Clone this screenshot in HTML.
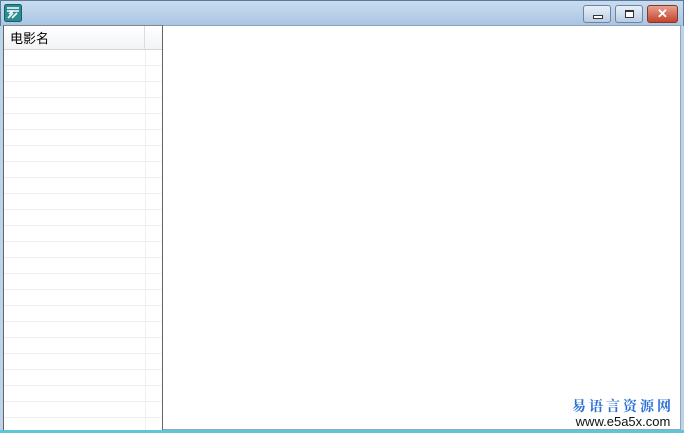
<!DOCTYPE html>
<html><head><meta charset="utf-8"><style>
*{margin:0;padding:0;box-sizing:border-box}
body{width:684px;height:433px;overflow:hidden;background:#bcd3ea;position:relative;font-family:"Liberation Sans","Noto Sans CJK SC",sans-serif}
.title{position:absolute;left:0;top:0;width:684px;height:26px;background:linear-gradient(#c9dcf0,#a9c4e2);border:1px solid #5a7a99;border-bottom:none}
.client{position:absolute;left:3px;top:25px;width:678px;height:405px;background:#fff;border:1px solid #8ea6bf}
.bottom{position:absolute;left:0;top:430px;width:684px;height:3px;background:#5fc6d8}
.list{position:absolute;left:3px;top:25px;width:160px;height:406px;border:1px solid #646464;border-top:1px solid #828790;background:#fff;overflow:hidden}
.hdr{position:absolute;left:0;top:0;width:158px;height:24px;background:linear-gradient(#fff,#f3f4f6);border-bottom:1px solid #d5d5d5;font-size:13px;line-height:26px;padding-left:6px;color:#000}
.hdr:after{content:"";position:absolute;left:140px;top:0;width:1px;height:24px;background:#dcdcdc}
.rows{position:absolute;left:0;top:24px;width:158px;height:390px;background:repeating-linear-gradient(#fff 0,#fff 15px,#efefef 15px,#efefef 16px)}
.vl{position:absolute;left:141px;top:24px;width:1px;height:390px;background:#f0f0f0}
.btn{position:absolute;top:5px;height:18px;border:1px solid #6d83a0;border-radius:3px;background:linear-gradient(#e8f0f9,#b9cde3)}
.wm{position:absolute;right:10px;top:398px;text-align:center}
</style></head><body>
<div class="title"></div>
<svg style="position:absolute;left:4px;top:4px" width="18" height="18" viewBox="0 0 18 18"><rect x="0.5" y="0.5" width="17" height="17" rx="2" fill="#2a8c93" stroke="#1b5e66"/><path d="M3 4h12M3 7h12M5 10l4-3M8 14l5-5M4 14l5-5" stroke="#fff" stroke-width="1.6" fill="none"/></svg>
<div class="btn" style="left:583px;width:28px"><div style="position:absolute;left:9px;top:9px;width:10px;height:4px;border:1px solid #333;background:#fff"></div></div>
<div class="btn" style="left:615px;width:28px"><div style="position:absolute;left:9px;top:4px;width:9px;height:8px;border:1px solid #333;border-top-width:2px;background:#fff"></div></div>
<div class="btn" style="left:647px;width:31px;background:linear-gradient(#e7a18f,#c2432a);border-color:#8a3526;color:#fff;font-weight:bold;font-size:13px;text-align:center;line-height:16px">✕</div>
<div class="client"></div>
<div class="list"><div class="rows"></div><div class="vl"></div><div class="hdr">电影名</div></div>
<div class="bottom"></div>
<div class="wm"><div style="color:#2a6fd6;font-size:14px;font-weight:bold;letter-spacing:3px;line-height:17px;font-family:'Noto Serif CJK SC',serif">易语言资源网</div><div style="color:#111;font-size:13px;line-height:14px">www.e5a5x.com</div></div>
</body></html>
